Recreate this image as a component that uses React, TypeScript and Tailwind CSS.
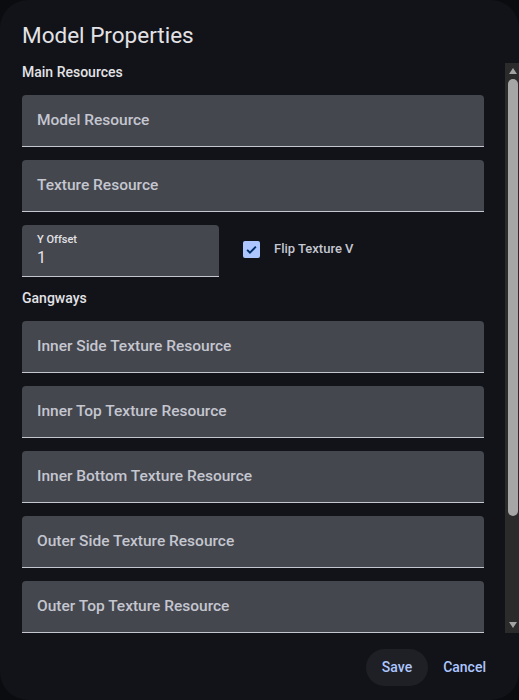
import React from 'react';

const mainFields = ['Model Resource', 'Texture Resource'];

const gangwayFields = [
  'Inner Side Texture Resource',
  'Inner Top Texture Resource',
  'Inner Bottom Texture Resource',
  'Outer Side Texture Resource',
  'Outer Top Texture Resource',
];

function FilledField({ label }: { label: string }) {
  return (
    <div className="flex h-[52px] shrink-0 items-center rounded-t-[4px] border-b border-[#c4c6d0] bg-[#44474e] px-[15px]">
      <span className="text-[15.5px] font-medium text-[#c4c6d0]">{label}</span>
    </div>
  );
}

// Dark classic-style scrollbar (drawn, since the headless browser hides native ones)
function ScrollBar() {
  return (
    <div className="flex w-[14px] shrink-0 flex-col bg-[#2b2b2c]">
      <div className="flex h-[16px] items-center justify-center pl-[1px]">
        <svg viewBox="0 0 8 6" className="h-[6px] w-[8px]">
          <path d="M4 0L8 6H0z" fill="#a3a3a3" />
        </svg>
      </div>
      <div className="flex flex-1 flex-col pl-[3px] pr-[1px]">
        <div className="h-[437px] rounded-full bg-[#a6a6a6]" />
      </div>
      <div className="flex h-[16px] items-center justify-center pl-[1px]">
        <svg viewBox="0 0 8 6" className="h-[6px] w-[8px]">
          <path d="M0 0H8L4 6z" fill="#a3a3a3" />
        </svg>
      </div>
    </div>
  );
}

export default function App() {
  return (
    <div className="h-[700px] w-[519px] bg-[#0b0c0f] font-['Roboto',sans-serif]">
      <div className="flex h-full flex-col overflow-hidden rounded-[28px] bg-[#111318]">
        {/* Header */}
        <h2 className="px-[22px] pt-[21px] pb-[14px] text-[22.5px] leading-7 text-[#e3e2e6]">
          Model Properties
        </h2>

        {/* Scrollable content */}
        <div className="flex min-h-0 flex-1">
          <div className="flex-1 overflow-hidden pl-[22px] pr-[21px]">
            <p className="text-[14px] leading-[18px] font-medium text-[#e3e2e6]">Main Resources</p>
            <div className="mt-[14px] flex flex-col gap-[13px]">
              {mainFields.map((f) => (
                <FilledField key={f} label={f} />
              ))}
              <div className="flex items-center gap-[24px]">
                <div className="flex h-[52px] w-[197px] flex-col justify-center rounded-t-[4px] border-b border-[#c4c6d0] bg-[#44474e] px-[15px]">
                  <span className="text-[11px] leading-[14px] font-medium text-[#e3e2e6]">Y Offset</span>
                  <span className="text-[16px] leading-[22px] text-[#e3e2e6]">1</span>
                </div>
                <div className="flex items-center gap-[14px] pb-[4px]">
                  <span className="flex h-[17px] w-[17px] items-center justify-center rounded-[2px] bg-[#adc6ff]">
                    <svg viewBox="0 0 24 24" className="h-[15px] w-[15px]" fill="none" stroke="#002e69" strokeWidth={3}>
                      <path d="M5 12.5l4.5 4.5L19 7.5" />
                    </svg>
                  </span>
                  <span className="text-[13px] font-medium text-[#c4c6d0]">Flip Texture V</span>
                </div>
              </div>
            </div>

            <p className="mt-[12px] text-[14px] leading-[18px] font-medium text-[#e3e2e6]">Gangways</p>
            <div className="mt-[14px] flex flex-col gap-[13px]">
              {gangwayFields.map((f) => (
                <FilledField key={f} label={f} />
              ))}
            </div>
          </div>
          <ScrollBar />
        </div>

        {/* Footer actions */}
        <div className="flex items-center justify-end gap-[3px] pt-[16px] pr-[21px] pb-[14px]">
          <button className="h-[37px] rounded-full bg-[#1e2025] px-[16px] text-[14px] font-medium text-[#adc6ff]">
            Save
          </button>
          <button className="h-[37px] rounded-full px-[12px] text-[14px] font-medium text-[#adc6ff]">
            Cancel
          </button>
        </div>
      </div>
    </div>
  );
}
